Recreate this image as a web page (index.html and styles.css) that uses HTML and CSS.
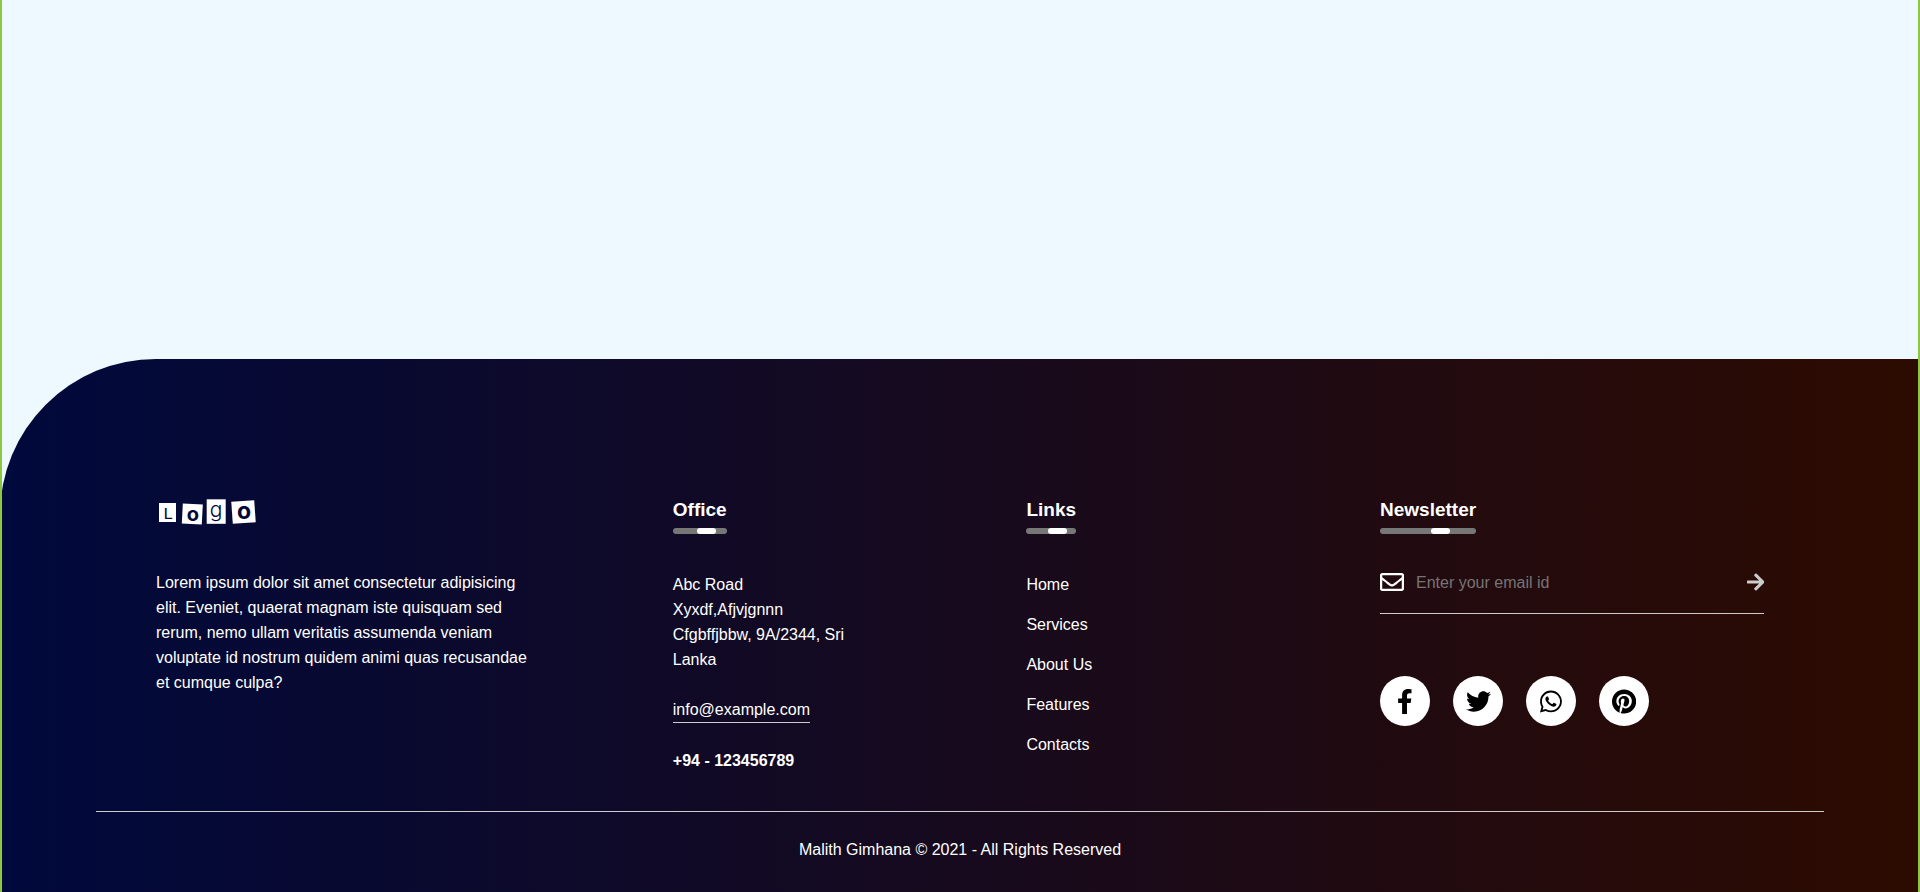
FILE: index.html
```html
<!DOCTYPE html>
<html lang="en">
<head>
<meta charset="utf-8">
<meta name="viewport" content="width=device-width, initial-scale=1">
<title>Footer</title>
<link rel="stylesheet" href="styles.css">
</head>
<body>
<div class="page">
  <main class="content"></main>
  <footer class="footer">
    <div class="row">
      <section class="col">
        <svg class="logo" width="102" height="30" viewBox="0 0 102 30" role="img" aria-label="Logo">
          <rect x="3" y="6" width="17" height="19" fill="#fff"/>
          <rect x="26.300" y="7" width="20" height="20" fill="#fff" transform="rotate(3 36 17)"/>
          <rect x="50.700" y="2.300" width="19" height="24.500" fill="#fff"/>
          <rect x="76" y="4" width="23" height="22" fill="#fff" transform="rotate(-4 87 15)"/>
          <g fill="#020938" text-anchor="middle">
            <text class="logo-slab" x="12" y="22">L</text>
            <text class="logo-bold" x="37" y="24">o</text>
            <text class="logo-thin" x="60" y="20">g</text>
            <text class="logo-bold logo-big" x="88" y="22">o</text>
          </g>
        </svg>
        <p class="about">Lorem ipsum dolor sit amet consectetur adipisicing elit. Eveniet, quaerat magnam iste quisquam sed rerum, nemo ullam veritatis assumenda veniam voluptate id nostrum quidem animi quas recusandae et cumque culpa?</p>
      </section>
      <section class="col">
        <h3 class="title">Office<span class="bar"><span class="thumb"></span></span></h3>
        <address class="address">
          <p>Abc Road</p>
          <p>Xyxdf,Afjvjgnnn</p>
          <p>Cfgbffjbbw, 9A/2344, Sri Lanka</p>
        </address>
        <a class="email" href="mailto:info@example.com">info@example.com</a>
        <h4 class="phone">+94 - 123456789</h4>
      </section>
      <section class="col">
        <h3 class="title">Links<span class="bar"><span class="thumb"></span></span></h3>
        <ul class="links">
          <li><a href="#">Home</a></li>
          <li><a href="#">Services</a></li>
          <li><a href="#">About Us</a></li>
          <li><a href="#">Features</a></li>
          <li><a href="#">Contacts</a></li>
        </ul>
      </section>
      <section class="col">
        <h3 class="title">Newsletter<span class="bar"><span class="thumb"></span></span></h3>
        <form class="newsletter">
          <svg class="mail" viewBox="0 0 512 512" aria-hidden="true"><path d="M464 64H48C21.490 64 0 85.490 0 112v288c0 26.510 21.490 48 48 48h416c26.510 0 48-21.490 48-48V112c0-26.510-21.490-48-48-48zm0 48v40.805c-22.422 18.259-58.168 46.651-134.587 106.490-16.841 13.247-50.201 45.072-73.413 44.701-23.208.375-56.579-31.459-73.413-44.701C106.180 199.465 70.425 171.067 48 152.805V112h416zM48 400V214.398c22.914 18.251 55.409 43.862 104.938 82.646 21.857 17.205 60.134 55.186 103.062 54.955 42.717.231 80.509-37.199 103.053-54.947 49.528-38.783 82.032-64.401 104.947-82.653V400H48z"/></svg>
          <input class="field" type="email" placeholder="Enter your email id" aria-label="Email address">
          <button class="send" type="submit" aria-label="Subscribe"><svg viewBox="0 0 448 512" aria-hidden="true"><path d="M190.500 66.900l22.200-22.200c9.400-9.400 24.600-9.400 33.900 0L441 239c9.400 9.400 9.400 24.600 0 33.900L246.600 467.300c-9.400 9.400-24.600 9.400-33.900 0l-22.200-22.200c-9.500-9.500-9.300-25 .4-34.300L311.400 296H24c-13.300 0-24-10.700-24-24v-32c0-13.300 10.700-24 24-24h287.400L190.900 101.200c-9.800-9.300-10-24.800-.4-34.300z"/></svg></button>
        </form>
        <div class="socials">
          <a class="social" href="#" aria-label="Facebook"><svg viewBox="0 0 320 512"><path d="M279.140 288l14.220-92.660h-88.910v-60.130c0-25.350 12.420-50.060 52.240-50.060h40.420V6.260S260.430 0 225.360 0c-73.220 0-121.080 44.380-121.080 124.720v70.620H22.890V288h81.390v224h100.170V288z"/></svg></a>
          <a class="social" href="#" aria-label="Twitter"><svg viewBox="0 0 512 512"><path d="M459.370 151.716c.325 4.548.325 9.097.325 13.645 0 138.720-105.583 298.558-298.558 298.558-59.452 0-114.680-17.219-161.137-47.106 8.447.974 16.568 1.299 25.340 1.299 49.055 0 94.213-16.568 130.274-44.832-46.132-.975-84.792-31.188-98.112-72.772 6.498.974 12.995 1.624 19.818 1.624 9.421 0 18.843-1.300 27.614-3.573-48.081-9.747-84.143-51.980-84.143-102.985v-1.299c13.969 7.797 30.214 12.670 47.431 13.319-28.264-18.843-46.781-51.005-46.781-87.391 0-19.492 5.197-37.360 14.294-52.954 51.655 63.675 129.300 105.258 216.365 109.807-1.624-7.797-2.599-15.918-2.599-24.040 0-57.828 46.782-104.934 104.934-104.934 30.213 0 57.502 12.670 76.670 33.137 23.715-4.548 46.456-13.320 66.599-25.340-7.798 24.366-24.366 44.833-46.132 57.827 21.117-2.273 41.584-8.122 60.426-16.243-14.292 20.791-32.161 39.308-52.628 54.253z"/></svg></a>
          <a class="social" href="#" aria-label="WhatsApp"><svg viewBox="0 0 448 512"><path d="M380.900 97.100C339 55.100 283.200 32 223.900 32c-122.400 0-222 99.600-222 222 0 39.100 10.200 77.300 29.600 111L0 480l117.700-30.900c32.400 17.700 68.900 27 106.100 27h.1c122.300 0 224.100-99.600 224.100-222 0-59.300-25.200-115-67.100-157zm-157 341.600c-33.200 0-65.700-8.900-94-25.700l-6.700-4-69.800 18.300L72 359.200l-4.400-7c-18.500-29.400-28.200-63.300-28.200-98.200 0-101.700 82.800-184.500 184.600-184.500 49.300 0 95.600 19.200 130.400 54.100 34.800 34.900 56.200 81.200 56.100 130.500 0 101.800-84.900 184.600-186.600 184.600zm101.200-138.200c-5.500-2.800-32.800-16.200-37.900-18-5.100-1.900-8.800-2.800-12.500 2.800-3.700 5.600-14.300 18-17.600 21.800-3.200 3.700-6.500 4.200-12 1.400-32.600-16.300-54-29.100-75.500-66-5.700-9.800 5.700-9.100 16.300-30.300 1.800-3.700.9-6.900-.5-9.700-1.400-2.800-12.500-30.100-17.100-41.200-4.500-10.800-9.100-9.300-12.500-9.500-3.200-.2-6.900-.2-10.600-.2-3.700 0-9.700 1.400-14.800 6.900-5.100 5.600-19.400 19-19.400 46.300 0 27.300 19.900 53.700 22.600 57.400 2.800 3.700 39.100 59.700 94.800 83.800 35.200 15.200 49 16.500 66.600 13.900 10.700-1.600 32.800-13.400 37.400-26.400 4.600-13 4.600-24.100 3.200-26.400-1.300-2.500-5-3.900-10.500-6.600z"/></svg></a>
          <a class="social" href="#" aria-label="Pinterest"><svg viewBox="0 0 496 512"><path d="M496 256c0 137-111 248-248 248-25.600 0-50.200-3.900-73.400-11.100 10.100-16.500 25.200-43.500 30.800-65 3-11.600 15.400-59 15.400-59 8.100 15.400 31.700 28.500 56.800 28.500 74.800 0 128.700-68.800 128.700-154.300 0-81.900-66.900-143.200-152.900-143.200-107 0-163.900 71.800-163.900 150.100 0 36.400 19.400 81.700 50.300 96.100 4.700 2.200 7.200 1.200 8.300-3.300.8-3.400 5-20.300 6.900-28.100.6-2.500.3-4.700-1.700-7.100-10.100-12.500-18.300-35.300-18.300-56.600 0-54.700 41.400-107.600 112-107.600 60.900 0 103.600 41.500 103.600 100.900 0 67.100-33.900 113.600-78 113.600-24.300 0-42.600-20.100-36.700-44.800 7-29.500 20.500-61.300 20.500-82.600 0-19-10.200-34.900-31.400-34.900-24.900 0-44.900 25.700-44.900 60.200 0 22 7.400 36.800 7.400 36.800s-24.500 103.800-29 123.200c-5 21.400-3 51.600-.9 71.200C65.400 450.900 0 361.100 0 256 0 119 111 8 248 8s248 111 248 248z"/></svg></a>
        </div>
      </section>
    </div>
    <hr class="rule">
    <p class="copyright">Malith Gimhana © 2021 - All Rights Reserved</p>
  </footer>
</div>
</body>
</html>
```

FILE: styles.css
```css
* {
  box-sizing: border-box;
  margin: 0;
  padding: 0;
}

body {
  font-family: "Liberation Sans", Arial, sans-serif;
  font-size: 16px;
  line-height: 25px;
}

a {
  color: inherit;
  text-decoration: none;
}

.page {
  position: relative;
  display: flex;
  flex-direction: column;
  min-height: 100vh;
  background: #edf9ff;
}

/* Green edge lines that run over both the content and the footer */
.page::after {
  content: "";
  position: absolute;
  inset: 0;
  border: solid #8dc63f;
  border-width: 0 2px;
  pointer-events: none;
}

.content {
  flex: 1;
}

.footer {
  padding: 138px 0 30px;
  border-top-left-radius: 156px;
  background: linear-gradient(to right, #00093c, #2d0b00);
  color: #fff;
}

.row {
  display: grid;
  grid-template-columns: 38fr 26fr 26fr 30fr;
  width: 85%;
  margin: 0 auto;
}

.col {
  min-width: 0;
  padding: 0 12px;
}

.logo {
  display: block;
  margin-bottom: 43px;
  overflow: visible;
}

.logo-slab {
  font: 17px "Liberation Mono", monospace;
}

.logo-bold {
  font: 700 20px Inter, sans-serif;
}

.logo-big {
  font-size: 23px;
}

.logo-thin {
  font: 300 21px Inter, sans-serif;
}

.about {
  width: 78%;
}

.title {
  width: fit-content;
  margin-bottom: 38px;
  font-size: 19px;
}

.bar {
  display: block;
  position: relative;
  height: 6px;
  margin-top: 6px;
  border-radius: 3px;
  background: #777;
}

.thumb {
  position: absolute;
  top: 0;
  left: 62%;
  width: 19px;
  height: 6px;
  margin-left: -9px;
  border-radius: 3px;
  background: #fff;
}

.address {
  width: 60%;
  margin-bottom: 25px;
  font-style: normal;
}

.email {
  display: block;
  width: fit-content;
  margin-bottom: 25px;
  border-bottom: 1px solid #ccc;
}

.phone {
  font-size: 16px;
}

.links {
  display: grid;
  gap: 15px;
  list-style: none;
}

.newsletter {
  display: flex;
  align-items: center;
  padding-bottom: 21px;
  border-bottom: 1px solid #ccc;
}

.mail {
  width: 24px;
  height: 24px;
  flex: none;
  margin: -2px 0;
  fill: #fff;
}

.field {
  flex: 1;
  min-width: 0;
  height: 20px;
  margin-left: 12px;
  border: 0;
  outline: 0;
  background: transparent;
  color: #ccc;
  font: inherit;
}

.field::placeholder {
  color: #757575;
}

.send {
  display: flex;
  border: 0;
  background: transparent;
  cursor: pointer;
}

.send svg {
  height: 20px;
  fill: #ccc;
}

.socials {
  display: flex;
  gap: 23px;
  margin-top: 62px;
}

.social {
  display: flex;
  align-items: center;
  justify-content: center;
  width: 50px;
  height: 50px;
  border-radius: 50%;
  background: #fff;
}

.social svg {
  height: 25px;
}

.rule {
  width: 90%;
  height: 1px;
  margin: 38px auto 25px;
  border: 0;
  background: #ccc;
}

.copyright {
  text-align: center;
}
```
